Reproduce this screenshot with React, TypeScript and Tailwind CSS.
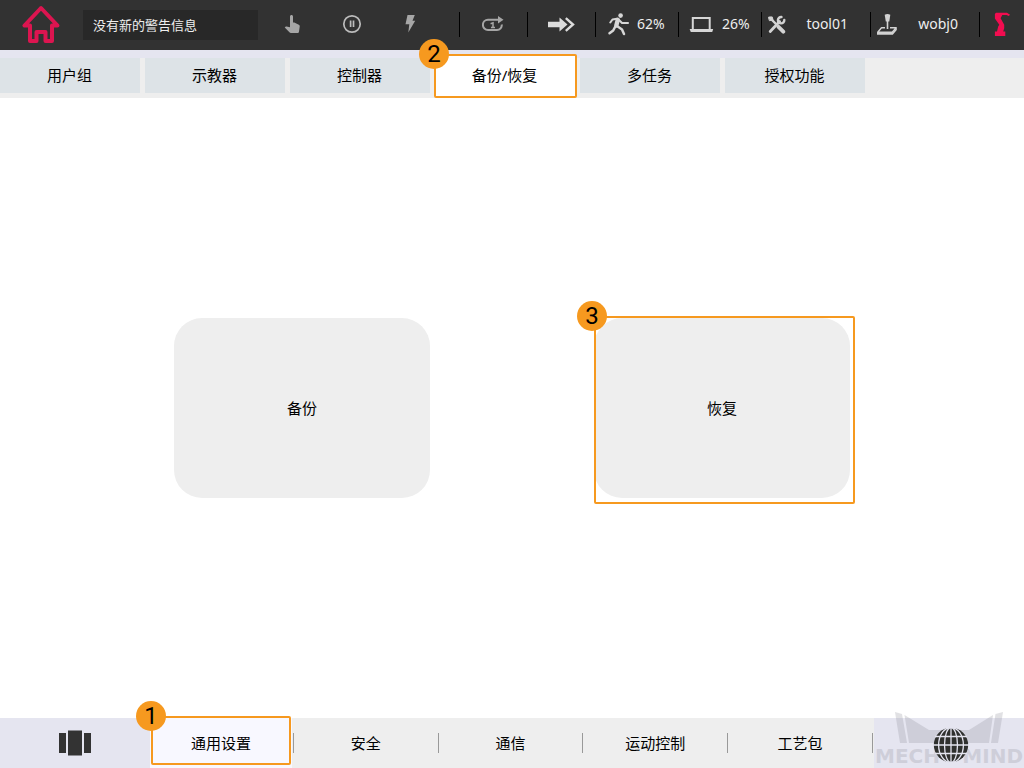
import React from "react";

const headerTabs = ["用户组", "示教器", "控制器", "备份/恢复", "多任务", "授权功能"];
const footerTabs = ["通用设置", "安全", "通信", "运动控制", "工艺包"];

function Callout({ n, className, badge = "-left-[17px]" }: { n: number; className: string; badge?: string }) {
  return (
    <span className={`pointer-events-none absolute z-10 rounded-xs border-2 border-[#f6991f] ${className}`}>
      <span
        className={`absolute -top-[17px] flex size-[30px] items-center justify-center rounded-full bg-[#f6991f] font-[Roboto,sans-serif] text-2xl leading-none text-black ${badge}`}
      >
        {n}
      </span>
    </span>
  );
}

function Cell({ className, children }: { className: string; children: React.ReactNode }) {
  return (
    <div className={`relative flex h-[50px] shrink-0 items-center pb-0.5 ${className}`}>
      <span className="absolute top-3 left-0 h-[25px] w-px bg-black" />
      {children}
    </div>
  );
}

const HomeIcon = () => (
  <svg viewBox="22 5 38 39" className="h-[39px] w-[38px]" fill="none" stroke="#dc1550" strokeWidth="4" strokeLinejoin="round" aria-hidden="true">
    <path d="M41 8 24.5 25.5H30V41H36.5V32H45.5V41H52V25.5H57.5Z" />
  </svg>
);

const HandIcon = () => (
  <svg viewBox="4 5 16 20" className="h-5 w-4 shrink-0" fill="#a6a6a6" aria-hidden="true">
    <path d="M18.84 15.87l-4.54-2.26c-.17-.07-.35-.11-.54-.11H13v-6C13 6.67 12.33 6 11.5 6S10 6.67 10 7.5v10.74l-3.43-.72c-.08-.01-.15-.03-.24-.03-.31 0-.59.13-.79.33l-.79.8 4.94 4.94c.27.27.65.44 1.06.44h6.79c.75 0 1.33-.55 1.44-1.28l.75-5.27c.01-.07.02-.14.02-.2 0-.62-.38-1.16-.91-1.38z" />
  </svg>
);

const PauseIcon = () => (
  <svg viewBox="0 0 20 20" className="size-5 shrink-0" fill="none" stroke="#bcbcbc" strokeWidth="1.7" aria-hidden="true">
    <circle cx="10" cy="10" r="8.2" />
    <path d="M8.6 6.5V13M11.5 6.5V13" />
  </svg>
);

const BoltIcon = () => (
  <svg viewBox="0 0 12 20" className="h-5 w-3 shrink-0" fill="#a6a6a6" aria-hidden="true">
    <path d="M3.5 1H10.8L8.5 6.8H11.2L4.3 18.6L5.3 10.2H1.5Z" />
  </svg>
);

const LoopIcon = () => (
  <svg viewBox="483 15 22 18" className="h-[18px] w-[22px]" fill="none" stroke="#a6a6a6" strokeWidth="2" aria-hidden="true">
    <path d="M499 19.8H489A4.8 4.8 0 0 0 489 30H498A4.8 4.8 0 0 0 502.7 24.5" />
    <path d="M499 16 504.5 19.8 499 23.6Z" fill="#a6a6a6" stroke="none" />
    <path d="M491.6 23.8 494 22.8V28M492 27.5H496" strokeWidth="1.5" />
  </svg>
);

const ForwardIcon = () => (
  <svg viewBox="548 16 28 17" className="h-[17px] w-7" fill="#dcdcdc" aria-hidden="true">
    <path d="M549 21.8H560.5V17.5L568.5 24.5L560.5 31.5V27.2H549Z" />
    <path d="M566.8 18.2 574 24.5 566.8 30.8" fill="none" stroke="#dcdcdc" strokeWidth="2.4" />
  </svg>
);

const RunIcon = () => (
  <svg viewBox="607 13 23 24" className="h-6 w-[23px] shrink-0" fill="none" stroke="#d6d6d6" strokeLinecap="round" strokeLinejoin="round" aria-hidden="true">
    <circle cx="620.6" cy="16.6" r="2.3" fill="#d6d6d6" stroke="none" />
    <path d="M617.8 20.8 616.3 26.5" strokeWidth="4.4" />
    <path d="M617 19.8 612.5 20.5 610.3 23.5M619 21 622 24H628" strokeWidth="2.1" />
    <path d="M617 27 622 30.5 624 35M615.3 27.5 613.2 31.5 609.5 34.3" strokeWidth="2.5" />
  </svg>
);

const LaptopIcon = () => (
  <svg viewBox="689 16 25 17" className="h-[17px] w-[25px] shrink-0" aria-hidden="true">
    <path d="M692.8 29V18H709.7V29" fill="none" stroke="#d6d6d6" strokeWidth="2" />
    <path d="M689.6 29H713.2L712.2 32H690.8Z" fill="#d6d6d6" />
  </svg>
);

const ToolsIcon = () => (
  <svg viewBox="767 15 19 19" className="size-[19px] shrink-0" fill="none" stroke="#d2d2d2" strokeLinecap="round" strokeLinejoin="round" aria-hidden="true">
    <path d="M770 17.8 776 24" strokeWidth="2.4" />
    <path d="M768.8 17.2 772.2 16.9 773 19.8 769.8 20.6Z" fill="#d2d2d2" strokeWidth="1" />
    <path d="M778.5 26.8 783.3 31.7" strokeWidth="3.8" />
    <path d="M770.2 31.5 779.6 21.5" strokeWidth="2.8" />
    <path d="M781.5 17A3.2 3.2 0 1 0 784.3 20" strokeWidth="2.4" />
  </svg>
);

const JoystickIcon = () => (
  <svg viewBox="877 12 22 23" className="h-[23px] w-[22px] shrink-0" fill="none" stroke="#d2d2d2" strokeLinejoin="round" aria-hidden="true">
    <path d="M885.7 13.8Q888.5 12.2 891.3 13.8L890.3 20.5H886.8Z" fill="#d2d2d2" stroke="none" />
    <path d="M888.5 19V28" strokeWidth="1.6" />
    <path d="M886 26.8H882.5L878.7 31.2H893.2L897.2 26.8H891" strokeWidth="1.4" />
    <path d="M878 31.2H893.5L897.8 26.8V29L893.8 33.8H878Z" fill="#d2d2d2" stroke="none" />
  </svg>
);

const RobotIcon = () => (
  <svg viewBox="993 12 18 25" className="h-[25px] w-[18px]" fill="#f20d50" aria-hidden="true">
    <path d="M996 12.8H1007L1010 14.8L1008.8 15.9L1006.5 15H1002.3L1000.6 18.3L1004.2 24.7V28.2L1003.2 31.5H1005.3V36H994.9V31.5H997L998.2 26.5L999.3 24.8L994.9 18.5V14Z" />
  </svg>
);

const PanelsIcon = () => (
  <svg viewBox="0 0 32 26" className="h-[26px] w-8" fill="#333" aria-hidden="true">
    <path d="M0 3H7V23H0ZM9 .5H23V25.5H9ZM25 3H32V23H25Z" />
  </svg>
);

const GlobeIcon = () => (
  <svg viewBox="0 0 36 36" className="relative size-9" fill="none" stroke="#e5e5f0" strokeWidth="1.3" aria-hidden="true">
    <circle cx="18" cy="18" r="17.2" fill="#2f302e" stroke="none" />
    <path d="M18 0V36M0 18H36M2 9.5H34M2 26.5H34" />
    <ellipse cx="18" cy="18" rx="6.5" ry="17.5" />
    <ellipse cx="18" cy="18" rx="12.4" ry="17.5" />
  </svg>
);

const Watermark = () => (
  <span className="pointer-events-none absolute inset-x-0 bottom-0 flex flex-col items-center text-[#8c8c96] opacity-25">
    <svg viewBox="894 710 110 33" className="h-[33px] w-[110px]" fill="currentColor" aria-hidden="true">
      <path d="M895 711 902 713 907 742H900ZM904.5 714 929 729H969L993 714 989 742H909ZM995.5 713 1003 711 998 742H991Z" />
    </svg>
    <span className="flex w-full justify-between px-px font-['DejaVu_Sans',sans-serif] text-xl leading-6 font-bold">
      <span>MECH</span>
      <span>MIND</span>
    </span>
  </span>
);

export default function App() {
  return (
    <div className="flex min-h-screen flex-col bg-white font-['Noto_Sans','Noto_Sans_CJK_SC',sans-serif] text-[15px] text-black">
      <header className="flex h-[50px] items-center bg-[#323232] text-sm text-[#eee]">
        <button aria-label="主页" className="flex w-[83px] shrink-0 justify-center pr-0.5 pb-0.5">
          <HomeIcon />
        </button>
        <div className="h-[30px] min-w-0 flex-1 truncate bg-[#282828] px-[10px] text-[13px] leading-[30px]">没有新的警告信息</div>
        <div className="flex w-[201px] shrink-0 items-center gap-[42px] pb-0.5 pl-[26px]">
          <HandIcon />
          <PauseIcon />
          <BoltIcon />
        </div>
        <Cell className="w-[68px] justify-center"><LoopIcon /></Cell>
        <Cell className="w-[68px] justify-center"><ForwardIcon /></Cell>
        <Cell className="w-[83px] gap-[7px] pl-3"><RunIcon />62%</Cell>
        <Cell className="w-[83px] gap-2 pl-[11px]"><LaptopIcon />26%</Cell>
        <Cell className="w-[109px] pr-[22px] pl-[6px]">
          <ToolsIcon />
          <span className="flex-1 text-right">tool01</span>
        </Cell>
        <Cell className="w-[109px] pr-[21px] pl-[6px]">
          <JoystickIcon />
          <span className="flex-1 text-right">wobj0</span>
        </Cell>
        <Cell className="w-[45px] justify-center"><RobotIcon /></Cell>
      </header>

      <nav className="flex h-12 gap-[5px] border-t-8 border-[#e5e5f0] bg-[#eee] pb-[5px]">
        {headerTabs.map((label, i) => (
          <button
            key={label}
            className={`relative isolate max-w-[140px] flex-1 pr-px ${i === 3 ? "z-10 bg-white" : "bg-[#dde3e7]"}`}
          >
            {i === 3 && <Callout n={2} className="-top-1 -right-0.5 -bottom-[5px] -left-px bg-white" />}
            <span className="relative z-20">{label}</span>
          </button>
        ))}
      </nav>

      <main className="flex flex-1 items-center justify-center gap-41">
        <button className="h-[180px] w-64 rounded-[28px] bg-[#eee]">备份</button>
        <button className="relative h-[180px] w-64 rounded-[28px] bg-[#eee]">
          恢复
          <Callout n={3} className="-top-0.5 -right-[5px] -bottom-1.5 left-0" badge="-left-[19px]" />
        </button>
      </main>

      <footer className="flex h-[50px] bg-[#eee]">
        <button aria-label="任务窗口" className="flex w-[150px] shrink-0 items-center justify-center bg-[#e5e5f0]">
          <PanelsIcon />
        </button>
        <nav className="flex flex-1">
          {footerTabs.map((label, i) => (
            <div key={label} className="relative flex flex-1 items-center pr-[3px]">
              <button className={`h-full flex-1 ${i === 0 ? "bg-[#f8f8ff]" : ""}`}>{label}</button>
              <span className="absolute right-px top-[15px] h-5 w-px bg-[#999]" />
              {i === 0 && <Callout n={1} className="-top-0.5 right-1 bottom-[3px] left-px" />}
            </div>
          ))}
        </nav>
        <button aria-label="语言" className="relative flex w-[150px] shrink-0 items-center justify-center bg-[#e5e5f0] pt-1 pl-1">
          <Watermark />
          <GlobeIcon />
        </button>
      </footer>
    </div>
  );
}
